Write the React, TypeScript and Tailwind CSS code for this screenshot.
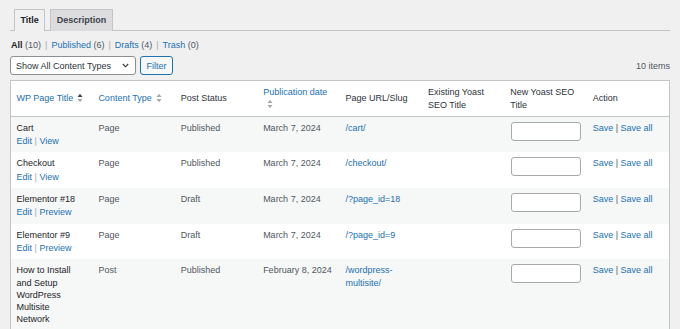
import React from "react";

const font = { fontFamily: '"Liberation Sans", Arial, sans-serif' };

function SortIcon({ active }: { active?: boolean }) {
  return (
    <svg width="6" height="10" viewBox="0 0 6 10" className="inline-block align-middle ml-[4px] -mt-[2px]">
      <polygon points="0.5,4 3,0.8 5.5,4" fill={active ? "#3c434a" : "#a7aaad"} />
      <polygon points="0.5,6 3,9.2 5.5,6" fill="#a7aaad" />
    </svg>
  );
}

type Row = {
  title: string;
  type: string;
  status: string;
  date: string;
  slug: string;
  second: string;
};

const rows: Row[] = [
  { title: "Cart", type: "Page", status: "Published", date: "March 7, 2024", slug: "/cart/", second: "View" },
  { title: "Checkout", type: "Page", status: "Published", date: "March 7, 2024", slug: "/checkout/", second: "View" },
  { title: "Elementor #18", type: "Page", status: "Draft", date: "March 7, 2024", slug: "/?page_id=18", second: "Preview" },
  { title: "Elementor #9", type: "Page", status: "Draft", date: "March 7, 2024", slug: "/?page_id=9", second: "Preview" },
  {
    title: "How to Install and Setup WordPress Multisite Network",
    type: "Post",
    status: "Published",
    date: "February 8, 2024",
    slug: "/wordpress-multisite/",
    second: "",
  },
];

export default function App() {
  return (
    <div className="min-h-screen bg-[#f0f0f1] text-[9px] leading-[12.3px] text-[#3c434a]" style={font}>
      <div className="px-[10px] pt-[9px]">
        {/* Tabs */}
        <div className="flex gap-[5px] pl-[4px] border-b border-[#c3c4c7]">
          <div className="h-[22px] px-[5.5px] flex items-center border border-[#c3c4c7] border-b-0 bg-[#f0f0f1] -mb-px font-bold text-[#1d2327]">
            Title
          </div>
          <div className="h-[22px] px-[5.5px] flex items-center border border-[#c3c4c7] border-b-0 bg-[#dcdcde] -mb-px font-bold text-[#3c434a]">
            Description
          </div>
        </div>

        {/* Status links */}
        <div className="mt-[8px] flex items-center gap-[4px] text-[#50575e] pl-px">
          <span>
            <span className="font-bold text-[#1d2327]">All</span> (10)
          </span>
          <span className="text-[#a7aaad]">|</span>
          <span>
            <span className="text-[#2271b1]">Published</span> (6)
          </span>
          <span className="text-[#a7aaad]">|</span>
          <span>
            <span className="text-[#2271b1]">Drafts</span> (4)
          </span>
          <span className="text-[#a7aaad]">|</span>
          <span>
            <span className="text-[#2271b1]">Trash</span> (0)
          </span>
        </div>

        {/* Filter row */}
        <div className="mt-[5px] flex items-center">
          <div className="w-[126px] h-[19px] flex items-center justify-between pl-[5px] pr-[6px] bg-white border border-[#8c8f94] rounded-[3px] text-[#2c3338]">
            <span>Show All Content Types</span>
            <svg width="7" height="5" viewBox="0 0 7 5">
              <polyline points="0.8,1 3.5,3.8 6.2,1" fill="none" stroke="#2c3338" strokeWidth="1.1" />
            </svg>
          </div>
          <div className="ml-[4px] w-[33px] h-[19px] flex items-center justify-center border border-[#2271b1] rounded-[3px] bg-[#f6f7f7] text-[#2271b1]">
            Filter
          </div>
          <div className="ml-auto text-[#50575e]">10 items</div>
        </div>

        {/* Table */}
        <table className="mt-[5px] w-full table-fixed border-collapse border border-[#c3c4c7] bg-white">
          <thead>
            <tr className="border-b border-[#c3c4c7]">
              <th className="px-[5.5px] py-[5px] text-left font-normal align-middle text-[#2271b1]">
                WP Page Title
                <SortIcon active />
              </th>
              <th className="px-[5.5px] py-[5px] text-left font-normal align-middle text-[#2271b1]">
                Content Type
                <SortIcon />
              </th>
              <th className="px-[5.5px] py-[5px] text-left font-normal align-middle text-[#2c3338]">Post Status</th>
              <th className="px-[5.5px] py-[5px] text-left font-normal align-middle text-[#2271b1]">
                Publication date
                <SortIcon />
              </th>
              <th className="px-[5.5px] py-[5px] text-left font-normal align-middle text-[#2c3338]">Page URL/Slug</th>
              <th className="px-[5.5px] py-[5px] text-left font-normal align-middle text-[#2c3338]">
                Existing Yoast SEO Title
              </th>
              <th className="px-[5.5px] py-[5px] text-left font-normal align-middle text-[#2c3338]">
                New Yoast SEO Title
              </th>
              <th className="px-[5.5px] py-[5px] text-left font-normal align-middle text-[#2c3338]">Action</th>
            </tr>
          </thead>
          <tbody>
            {rows.map((r, i) => (
              <tr key={r.title} className={i % 2 === 0 ? "bg-[#f6f7f7]" : "bg-white"}>
                <td className="px-[5.5px] py-[5px] align-top">
                  <div className="text-[#1d2327] pr-[8px]">{r.title}</div>
                  {r.second && (
                    <div className="pt-px text-[#2271b1]">
                      Edit <span className="text-[#a7aaad]">|</span> {r.second}
                    </div>
                  )}
                </td>
                <td className="px-[5.5px] py-[5px] align-top text-[#50575e]">{r.type}</td>
                <td className="px-[5.5px] py-[5px] align-top text-[#50575e]">{r.status}</td>
                <td className="px-[5.5px] py-[5px] align-top text-[#50575e]">{r.date}</td>
                <td className="px-[5.5px] py-[5px] align-top text-[#2271b1] break-words pr-[12px]">{r.slug}</td>
                <td className="px-[5.5px] py-[5px] align-top"></td>
                <td className="px-[5.5px] pt-[5px] align-top">
                  <div className="ml-px w-[70px] h-[19px] bg-white border border-[#a7aaad] rounded-[3px]"></div>
                </td>
                <td className="px-[5.5px] py-[5px] align-top text-[#2271b1]">
                  Save <span className="text-[#50575e]">|</span> Save all
                </td>
              </tr>
            ))}
          </tbody>
        </table>
      </div>
    </div>
  );
}
